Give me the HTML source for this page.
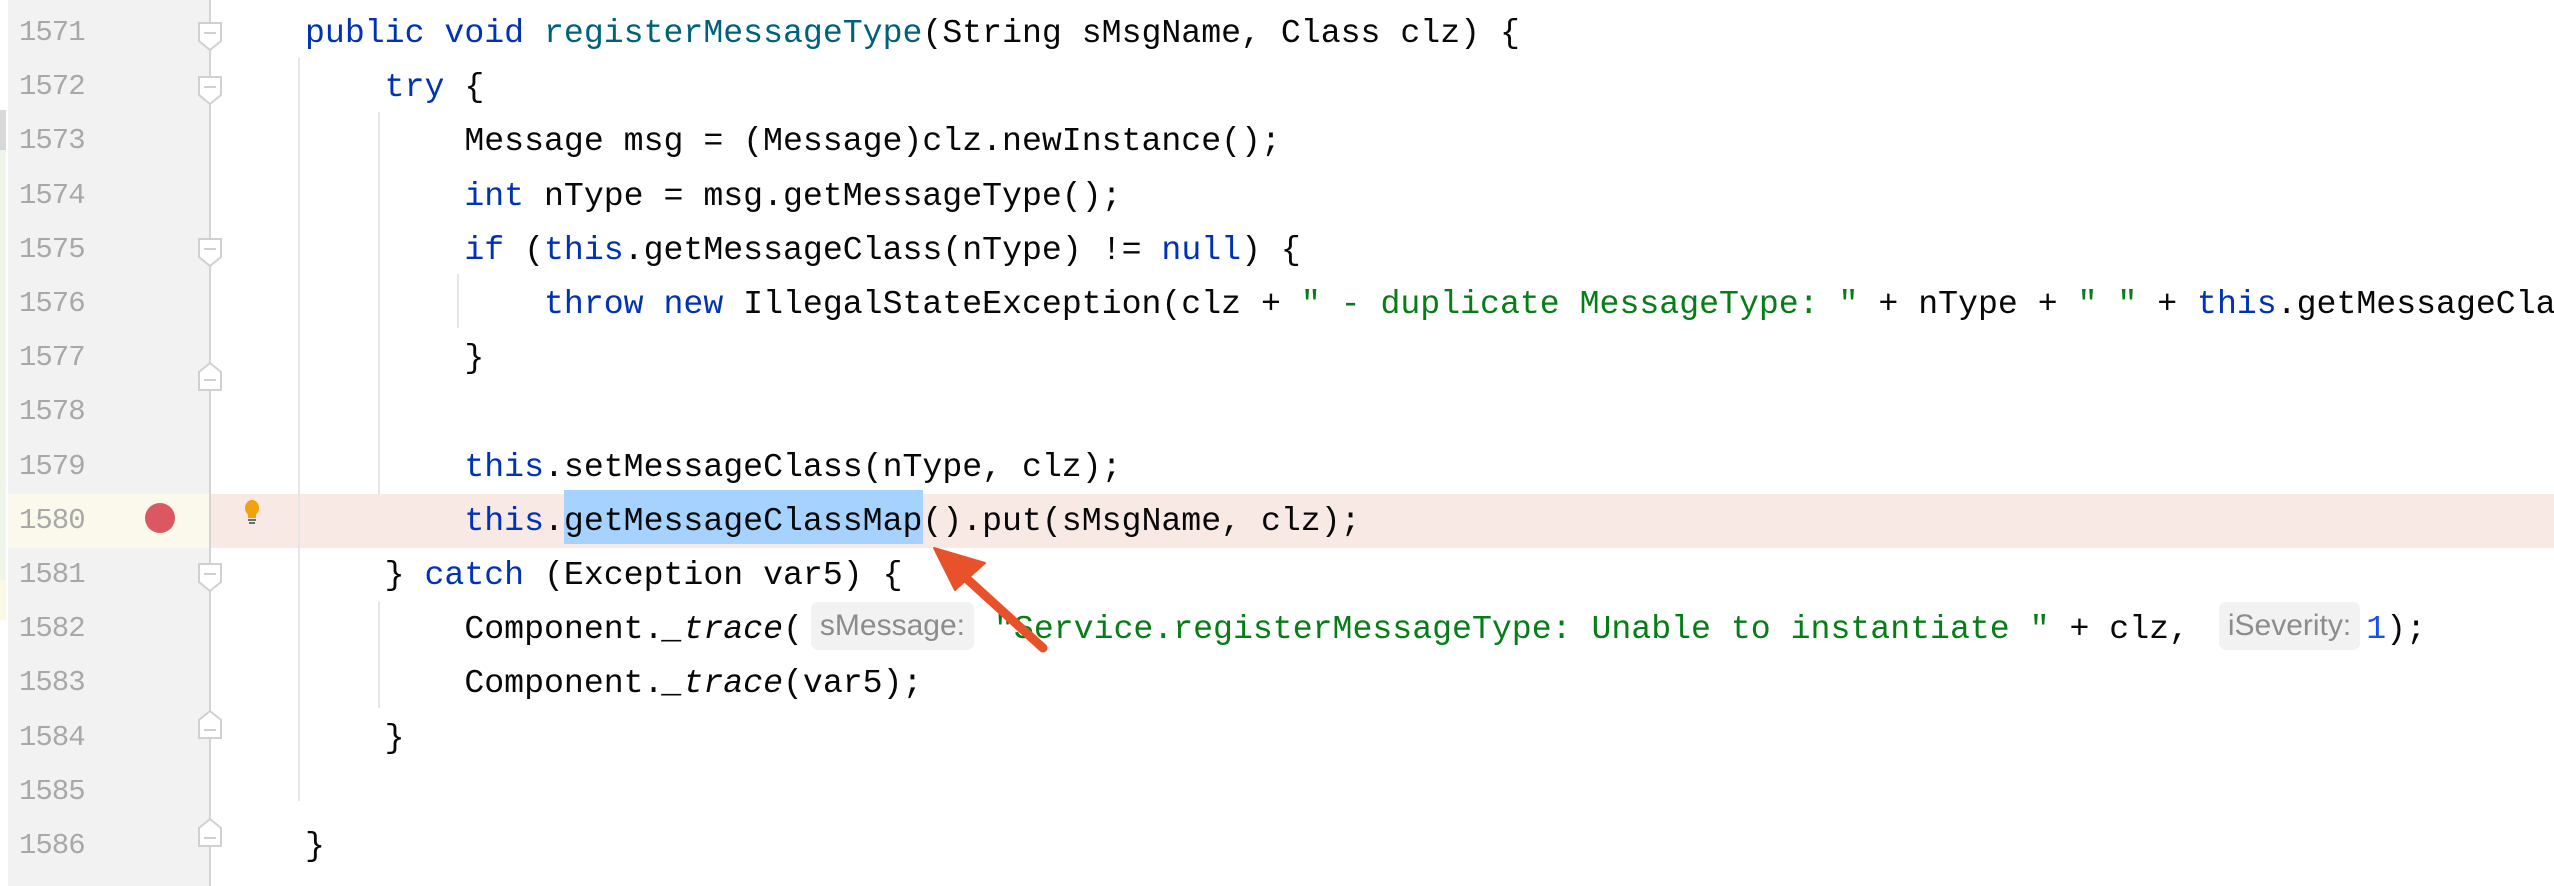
<!DOCTYPE html>
<html style="overflow:hidden;width:2554px;height:886px"><head><meta charset="utf-8"><style>
*{margin:0;padding:0;box-sizing:border-box}
body{width:2554px;height:886px;overflow:hidden;background:#fff;position:relative;font-family:"Liberation Mono",monospace}
.wrap{position:absolute;left:0;top:0;width:2554px;height:886px;overflow:hidden}
.gut{position:absolute;left:8px;top:0;width:202px;height:886px;background:#f2f2f2}
.gl{position:absolute;left:209px;top:0;width:2px;height:886px;background:#d4d4d4}
.strip{position:absolute;left:0;top:0;width:8px;height:886px;background:#fff}
.row{position:absolute;left:0;width:2554px;height:54px;overflow:hidden}
.num{position:absolute;left:19px;font-size:29px;color:#a8a8a8;line-height:54px;letter-spacing:-1px}
.code{position:absolute;left:305px;font-size:33.2px;line-height:54px;color:#080808;white-space:pre}
.k{color:#0033b3}.m{color:#00627a}.s{color:#067d17}.n{color:#1750eb}.i{font-style:italic}
.guide{position:absolute;width:2px;background:#e6e6e6}
.hint{display:inline-block;font-family:"Liberation Sans",sans-serif;font-size:30px;color:#8c8c8c;background:#f2f2f2;border-radius:7px;line-height:48px;height:48px;vertical-align:middle;padding:0 9px;position:relative;top:-3px}
</style></head><body><div class="wrap">
<div class="gut"></div>
<div class="strip"></div>
<div style="position:absolute;left:0;top:110px;width:6px;height:40px;background:#d8d8d8"></div>
<div style="position:absolute;left:0;top:150px;width:6px;height:430px;background:#eef6ea"></div>
<div style="position:absolute;left:0;top:580px;width:6px;height:40px;background:#fbf9e6"></div>
<div style="position:absolute;left:8px;top:494px;width:202px;height:54px;background:#fbf9ec"></div>
<div style="position:absolute;left:210px;top:494px;width:2344px;height:54px;background:#f8e9e5"></div>
<div class="gl"></div>
<div style="position:absolute;left:564px;top:490px;width:359px;height:54px;background:#a6d2ff"></div>
<div class="guide" style="left:298px;top:58px;height:743px"></div>
<div class="guide" style="left:378px;top:112px;height:382px"></div>
<div class="guide" style="left:457px;top:274px;height:54px"></div>
<div class="guide" style="left:378px;top:602px;height:106px"></div>

<div class="row" style="top:6px"><span class="num">1571</span><span class="code"><span class="k">public void</span> <span class="m">registerMessageType</span>(String sMsgName, Class clz) {</span></div>
<div class="row" style="top:60.2px"><span class="num">1572</span><span class="code">    <span class="k">try</span> {</span></div>
<div class="row" style="top:114.4px"><span class="num">1573</span><span class="code">        Message msg = (Message)clz.newInstance();</span></div>
<div class="row" style="top:168.6px"><span class="num">1574</span><span class="code">        <span class="k">int</span> nType = msg.getMessageType();</span></div>
<div class="row" style="top:222.8px"><span class="num">1575</span><span class="code">        <span class="k">if</span> (<span class="k">this</span>.getMessageClass(nType) != <span class="k">null</span>) {</span></div>
<div class="row" style="top:277px"><span class="num">1576</span><span class="code">            <span class="k">throw new</span> IllegalStateException(clz + <span class="s">" - duplicate MessageType: "</span> + nType + <span class="s">" "</span> + <span class="k">this</span>.getMessageClass(nType));</span></div>
<div class="row" style="top:331.2px"><span class="num">1577</span><span class="code">        }</span></div>
<div class="row" style="top:385.4px"><span class="num">1578</span></div>
<div class="row" style="top:439.6px"><span class="num">1579</span><span class="code">        <span class="k">this</span>.setMessageClass(nType, clz);</span></div>
<div class="row" style="top:493.8px"><span class="num">1580</span><span class="code">        <span class="k">this</span>.getMessageClassMap().put(sMsgName, clz);</span></div>
<div class="row" style="top:548px"><span class="num">1581</span><span class="code">    } <span class="k">catch</span> (Exception var5) {</span></div>
<div class="row" style="top:602.2px"><span class="num">1582</span><span class="code">        Component.<span class="i">_trace</span>(<span class="hint" style="margin-left:8px;margin-right:20px">sMessage:</span><span class="s">"Service.registerMessageType: Unable to instantiate "</span> + clz, <span class="hint" style="margin-left:10px;margin-right:6px">iSeverity:</span><span class="n">1</span>);</span></div>
<div class="row" style="top:656.4px"><span class="num">1583</span><span class="code">        Component.<span class="i">_trace</span>(var5);</span></div>
<div class="row" style="top:710.6px"><span class="num">1584</span><span class="code">    }</span></div>
<div class="row" style="top:764.8px"><span class="num">1585</span></div>
<div class="row" style="top:819px"><span class="num">1586</span><span class="code">}</span></div>
<div class="row" style="top:873.2px"><span class="num">1587</span></div>

<svg style="position:absolute;left:0;top:0" width="2554" height="886">
<g fill="#fff" stroke="#d0d0d0" stroke-width="2">
<path d="M199 23h22v18l-11 9l-11-9z"/><path d="M204 33h12"/>
<path d="M199 77h22v18l-11 9l-11-9z"/><path d="M204 87h12"/>
<path d="M199 239h22v18l-11 9l-11-9z"/><path d="M204 249h12"/>
<path d="M199 564h22v18l-11 9l-11-9z"/><path d="M204 574h12"/>
<path d="M199 372l11-9l11 9v18h-22z"/><path d="M204 380h12"/>
<path d="M199 720l11-9l11 9v18h-22z"/><path d="M204 730h12"/>
<path d="M199 828l11-9l11 9v18h-22z"/><path d="M204 838h12"/>
</g>
<circle cx="160" cy="518" r="15" fill="#db5860"/>
<g>
<ellipse cx="252" cy="508" rx="7" ry="8" fill="#f0a30a"/>
<rect x="248" y="513" width="8" height="5" fill="#f0a30a"/>
<rect x="248" y="519" width="8" height="2" fill="#6e6e6e"/>
<rect x="249" y="522" width="6" height="2" fill="#6e6e6e"/>
</g>
<g fill="#e8522a" stroke="#e8522a">
<line x1="1043" y1="648" x2="955" y2="568" stroke-width="9" stroke-linecap="round"/>
<path d="M934 548 L985 563 L955 590 Z" stroke-width="2" stroke-linejoin="round"/>
</g>
</svg>
</div></body></html>
